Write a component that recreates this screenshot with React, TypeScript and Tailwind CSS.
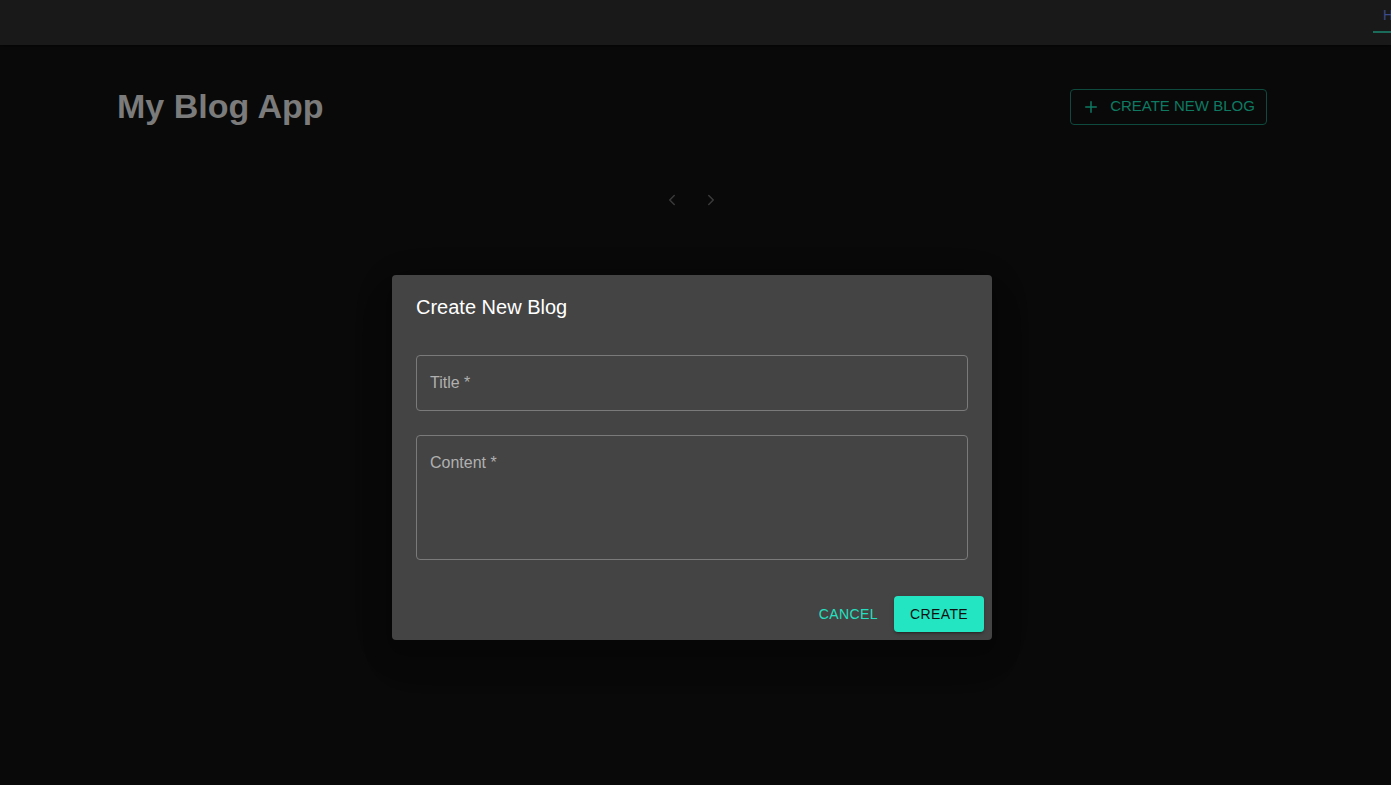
import { ChevronLeft, ChevronRight, Plus } from 'lucide-react';

const App = () => {
  return (
    <div className="relative min-h-[785px] w-full overflow-hidden bg-[#090909] font-['Liberation_Sans',Arial,sans-serif]">
      {/* App bar */}
      <div className="flex h-[45px] justify-end bg-[#191919] shadow-[0_1px_3px_rgba(0,0,0,0.6)]">
        <div className="relative flex h-full w-[18px] items-start overflow-hidden pl-[10px] pt-[5px]">
          <span className="text-[14px] text-[#3a4a8a]">H</span>
          <span className="absolute bottom-[12px] left-0 h-[2px] w-full bg-[#1a6b5a]" />
        </div>
      </div>

      <div className="pl-[117px] pr-[124px]">
        <div className="flex items-center justify-between pt-[36px]">
          <h1 className="text-[34px] font-bold text-[#7b7b7b]">My Blog App</h1>
          <button className="flex h-[36px] w-[197px] items-center justify-center gap-[10px] rounded-[4px] border border-[#0e4a3e] text-[15px] text-[#0e7a62]">
            <Plus size={18} strokeWidth={2} />
            CREATE NEW BLOG
          </button>
        </div>

        <div className="mt-[59px] flex justify-center gap-[21px] pr-[2px] text-[#3a3a3a]">
          <ChevronLeft size={18} />
          <ChevronRight size={18} />
        </div>
      </div>

      {/* Dialog */}
      <div className="absolute left-[392px] top-[275px] w-[600px] rounded-[4px] bg-[#444444] shadow-[0_11px_15px_-7px_rgba(0,0,0,0.08),0_24px_38px_3px_rgba(0,0,0,0.05),0_9px_46px_8px_rgba(0,0,0,0.04)]">
        <h2 className="px-[24px] pb-[16px] pt-[17px] text-[20px] font-medium text-white">Create New Blog</h2>
        <div className="flex flex-col gap-[24px] px-[24px] pt-[17px]">
          <div className="flex h-[56px] items-center rounded-[4px] border border-[#7a7a7a] px-[13px]">
            <span className="text-[16px] text-[#b0b0b0]">Title *</span>
          </div>
          <div className="h-[125px] rounded-[4px] border border-[#7a7a7a] px-[13px] pt-[15px]">
            <span className="text-[16px] text-[#b0b0b0]">Content *</span>
          </div>
        </div>
        <div className="flex items-center justify-end gap-[8px] px-[8px] pb-[8px] pt-[36px]">
          <button className="h-[36px] px-[8px] text-[14px] font-medium tracking-[0.4px] text-[#24e0c0]">CANCEL</button>
          <button className="h-[36px] w-[90px] rounded-[4px] bg-[#23e5c2] text-[14px] font-medium tracking-[0.4px] text-[#111] shadow-[0_3px_1px_-2px_rgba(0,0,0,0.2),0_2px_2px_0_rgba(0,0,0,0.14),0_1px_5px_0_rgba(0,0,0,0.12)]">
            CREATE
          </button>
        </div>
      </div>
    </div>
  );
};

export default App;
